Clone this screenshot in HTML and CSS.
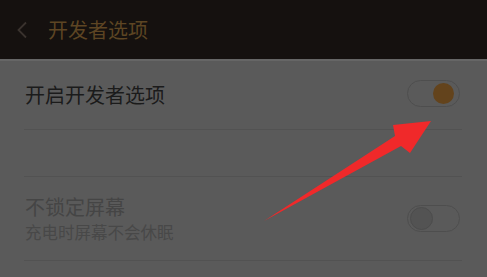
FILE: index.html
```html
<!DOCTYPE html>
<html lang="zh-CN">
<head>
    <meta charset="UTF-8">
    <meta name="viewport" content="width=device-width, initial-scale=1.0">
    <title>开发者选项</title>
    <link rel="stylesheet" href="styles.css">
</head>
<body>
    <div class="header">
        <svg class="backBtn" width="12" height="18" viewBox="0 0 12 18">
            <path d="M10 1.5 L2.5 9 L10 16.5" fill="none" stroke="#3a332e" stroke-width="1.8"/>
        </svg>
        <div class="title">开发者选项</div>
    </div>
    <ul class="list">
        <li class="row rowMain">
            <div class="label">开启开发者选项</div>
            <div class="switch on"><span></span></div>
        </li>
        <li class="row rowEmpty"></li>
        <li class="row rowSub">
            <div class="text">
                <div class="label dim">不锁定屏幕</div>
                <div class="sub">充电时屏幕不会休眠</div>
            </div>
            <div class="switch off"><span></span></div>
        </li>
    </ul>
    <svg class="arrow" width="487" height="277" viewBox="0 0 487 277">
        <polygon points="264,221 395,136 393,125 431,121 410,153 401,146" fill="#f0292a"/>
    </svg>
</body>
</html>
```

FILE: styles.css
```css
* {
    padding: 0px;
    margin: 0px;
    list-style: none;
}

body {
    position: relative;
    width: 487px;
    height: 277px;
    overflow: hidden;
    background-color: #5a5a5a;
    font-family: "Noto Sans CJK SC", "Noto Sans", sans-serif;
}

.header {
    display: flex;
    align-items: center;
    height: 59px;
    background-color: #15110f;
    border-bottom: 2px solid #666;
}

.header .backBtn {
    margin-left: 16px;
    margin-top: 1px;
}

.header .title {
    margin-left: 20px;
    font-size: 20px;
    line-height: 24px;
    color: #5d4523;
}

.list {
    padding: 0px 25px 0px 24px;
}

.list .row {
    display: flex;
    align-items: center;
    justify-content: space-between;
    border-bottom: 1px solid #525252;
}

.list .rowMain {
    height: 68px;
}

.list .rowEmpty {
    height: 46px;
}

.list .rowSub {
    height: 83px;
}

.list .label {
    margin-left: 1px;
    font-size: 20px;
    line-height: 24px;
    color: #1b1b1b;
}

.list .label.dim {
    color: #454545;
}

.list .sub {
    margin-left: 1px;
    margin-top: 2px;
    font-size: 16.5px;
    line-height: 22px;
    color: #484848;
}

.switch {
    position: relative;
    width: 51px;
    height: 25px;
    margin-right: 2px;
    border: 1px solid #4e4e4e;
    border-radius: 14px;
}

.switch span {
    position: absolute;
    top: 2px;
    width: 21px;
    height: 21px;
    border-radius: 50%;
}

.switch.on {
    margin-top: -4px;
}

.switch.on span {
    right: 5px;
    background-color: #63431c;
}

.switch.off span {
    left: 2px;
    background-color: #535353;
    border: 1px solid #4c4c4c;
    top: 1px;
}

.arrow {
    position: absolute;
    left: 0px;
    top: 0px;
}
```
